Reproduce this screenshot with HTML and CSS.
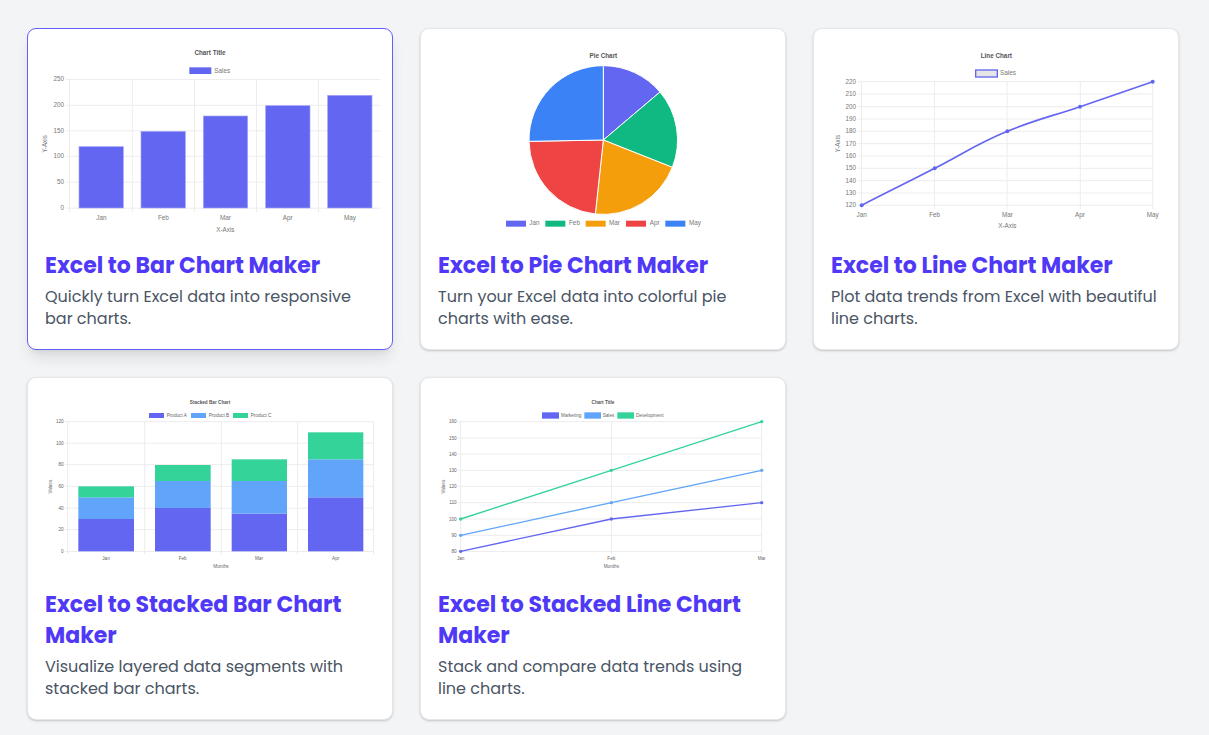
FILE: index.html
```
<!DOCTYPE html>
<html lang="en">
<head>
<meta charset="utf-8">
<meta name="viewport" content="width=device-width, initial-scale=1">
<title>Excel Chart Makers</title>
<link rel="stylesheet" href="styles.css">
</head>
<body>
<main class="grid">
  <a class="card card-active" href="#bar">
    <svg class="chart" viewBox="51 54 1038 609" role="img" aria-label="Bar chart">
      <path class="gridline" d="M138 178.5H1082M138 256H1082M138 332.5H1082M138 409H1082M138 486.5H1082M138 564.500H1082M148.500 178V577M337 178V577M523.500 178V577M709.500 178V577M895.500 178V577"/>
      <g class="indigo"><rect x="508" y="142" width="66" height="20"/><rect class="bar" x="177" y="380" width="133" height="184"/><rect class="bar" x="363" y="334" width="133" height="230"/><rect class="bar" x="550" y="288" width="133" height="276"/><rect class="bar" x="737" y="257" width="133" height="307"/><rect class="bar" x="923" y="226" width="133" height="338"/></g>
      <g class="label">
        <text class="title" x="570" y="104">Chart Title</text>
        <text class="start" x="583" y="158">Sales</text>
        <g class="end"><text x="132" y="184">250</text><text x="132" y="261">200</text><text x="132" y="339">150</text><text x="132" y="415">100</text><text x="132" y="492">50</text><text x="132" y="570">0</text></g>
        <text x="244" y="600">Jan</text><text x="430" y="600">Feb</text><text x="616" y="600">Mar</text><text x="803" y="600">Apr</text><text x="990" y="600">May</text>
        <text x="616" y="635">X-Axis</text>
        <text transform="translate(81 372) rotate(-90)">Y-Axis</text>
      </g>
    </svg>
    <div class="body">
      <h2 class="heading">Excel to Bar Chart Maker</h2>
      <p class="text">Quickly turn Excel data into responsive bar charts.</p>
    </div>
  </a>

  <a class="card" href="#pie">
    <svg class="chart" viewBox="51 54 1038 609" role="img" aria-label="Pie chart">
      <g class="slices">
        <path class="indigo" d="M571 360V137A223 223 0 0 1 741 216Z"/>
        <path class="green" d="M571 360L741 216A223 223 0 0 1 778 442Z"/>
        <path class="amber" d="M571 360L778 442A223 223 0 0 1 547 582Z"/>
        <path class="red" d="M571 360L547 582A223 223 0 0 1 348 364Z"/>
        <path class="blue" d="M571 360L348 364A223 223 0 0 1 571 137Z"/>
      </g>
      <rect class="indigo" x="279" y="602" width="60" height="18"/><rect class="green" x="397" y="602" width="60" height="18"/><rect class="amber" x="518" y="602" width="60" height="18"/><rect class="red" x="639" y="602" width="60" height="18"/><rect class="blue" x="757" y="602" width="60" height="18"/>
      <g class="label">
        <text class="title" x="571" y="113">Pie Chart</text>
        <g class="start"><text x="349" y="616">Jan</text><text x="468" y="616">Feb</text><text x="588" y="616">Mar</text><text x="710" y="616">Apr</text><text x="828" y="616">May</text></g>
      </g>
    </svg>
    <div class="body">
      <h2 class="heading">Excel to Pie Chart Maker</h2>
      <p class="text">Turn your Excel data into colorful pie charts with ease.</p>
    </div>
  </a>

  <a class="card" href="#line">
    <svg class="chart" viewBox="51 54 1038 609" role="img" aria-label="Line chart">
      <path class="gridline" d="M156 185H1040M156 222H1040M156 260H1040M156 297H1040M156 334H1040M156 371H1040M156 408H1040M156 445H1040M156 482H1040M156 519H1040M156 556H1040M166.500 185V567M385.500 185V567M603.500 185V567M823 185V567M1040 185V567"/>
      <rect class="hollow" x="509" y="150" width="65" height="21"/>
      <path class="line line-thick" stroke="#6366f1" d="M167 556C254 511 299 490 386 445S514 371 604 334C690 298 735 290 822 260S953 215 1040 185"/>
      <g class="indigo"><circle cx="167" cy="556" r="6"/><circle cx="386" cy="445" r="6"/><circle cx="604" cy="334" r="6"/><circle cx="822" cy="260" r="6"/><circle cx="1040" cy="185" r="6"/></g>
      <g class="label">
        <text class="title" x="571" y="113">Line Chart</text>
        <text class="start" x="582" y="166">Sales</text>
        <g class="end"><text x="150" y="191">220</text><text x="150" y="228">210</text><text x="150" y="266">200</text><text x="150" y="303">190</text><text x="150" y="340">180</text><text x="150" y="377">170</text><text x="150" y="413">160</text><text x="150" y="451">150</text><text x="150" y="488">140</text><text x="150" y="525">130</text><text x="150" y="561">120</text></g>
        <text x="167" y="590">Jan</text><text x="386" y="590">Feb</text><text x="604" y="590">Mar</text><text x="822" y="590">Apr</text><text x="1040" y="590">May</text>
        <text x="604" y="624">X-Axis</text>
        <text transform="translate(102 371) rotate(-90)">Y-Axis</text>
      </g>
    </svg>
    <div class="body">
      <h2 class="heading">Excel to Line Chart Maker</h2>
      <p class="text">Plot data trends from Excel with beautiful line charts.</p>
    </div>
  </a>

  <a class="card" href="#stacked-bar">
    <svg class="chart" viewBox="51 51 1038 579" role="img" aria-label="Stacked bar chart">
      <path class="gridline" d="M134 155H1062M134 219.500H1062M134 284H1062M134 349H1062M134 414.500H1062M134 479H1062M134 544.500H1062M143 155V553M374 155V553M604 155V553M832.500 155V553M1061 155V553"/>
      <g class="indigo"><rect x="387" y="129" width="45" height="15"/><rect x="175" y="447" width="167" height="97"/><rect x="405" y="414" width="167" height="130"/><rect x="635" y="431" width="166" height="113"/><rect x="864" y="382" width="166" height="162"/></g>
      <g class="sky"><rect x="513" y="129" width="45" height="15"/><rect x="175" y="382" width="167" height="65"/><rect x="405" y="333" width="167" height="81"/><rect x="635" y="333" width="166" height="98"/><rect x="864" y="268" width="166" height="114"/></g>
      <g class="mint"><rect x="639" y="129" width="45" height="15"/><rect x="175" y="349" width="167" height="33"/><rect x="405" y="285" width="167" height="48"/><rect x="635" y="268" width="166" height="65"/><rect x="864" y="187" width="166" height="81"/></g>
      <g class="label label-small">
        <text class="title" x="570" y="102">Stacked Bar Chart</text>
        <g class="start"><text x="440" y="141">Product A</text><text x="566" y="141">Product B</text><text x="692" y="141">Product C</text></g>
        <g class="end"><text x="131" y="160">120</text><text x="131" y="224">100</text><text x="131" y="289">80</text><text x="131" y="354">60</text><text x="131" y="419">40</text><text x="131" y="483">20</text><text x="131" y="549">0</text></g>
        <text x="258" y="570">Jan</text><text x="488" y="570">Feb</text><text x="717" y="570">Mar</text><text x="947" y="570">Apr</text>
        <text x="603" y="594">Months</text>
        <text transform="translate(96 350) rotate(-90)">Values</text>
      </g>
    </svg>
    <div class="body">
      <h2 class="heading">Excel to Stacked Bar Chart Maker</h2>
      <p class="text">Visualize layered data segments with stacked bar charts.</p>
    </div>
  </a>

  <a class="card" href="#stacked-line">
    <svg class="chart" viewBox="51 51 1038 579" role="img" aria-label="Stacked line chart">
      <path class="gridline" d="M134 155H1046M134 204H1046M134 252H1046M134 301H1046M134 349H1046M134 398H1046M134 447H1046M134 496H1046M134 544.500H1046M143 155V553M595.500 155V553M1046 155V553"/>
      <rect class="indigo" x="387" y="127" width="51" height="19"/><rect class="sky" x="514" y="127" width="50" height="19"/><rect class="mint" x="613" y="127" width="50" height="19"/>
      <g class="line"><path stroke="#6366f1" d="M143 544L595 447L1046 398"/><path stroke="#60a5fa" d="M143 496L595 398L1046 301"/><path stroke="#34d399" d="M143 447L595 301L1046 155"/></g>
      <g class="indigo"><circle cx="143" cy="544" r="5"/><circle cx="595" cy="447" r="5"/><circle cx="1046" cy="398" r="5"/></g>
      <g class="sky"><circle cx="143" cy="496" r="5"/><circle cx="595" cy="398" r="5"/><circle cx="1046" cy="301" r="5"/></g>
      <g class="mint"><circle cx="143" cy="447" r="5"/><circle cx="595" cy="301" r="5"/><circle cx="1046" cy="155" r="5"/></g>
      <g class="label label-small">
        <text class="title" x="570" y="102">Chart Title</text>
        <g class="start"><text x="444" y="141">Marketing</text><text x="569" y="141">Sales</text><text x="669" y="141">Development</text></g>
        <g class="end"><text x="131" y="160">160</text><text x="131" y="209">150</text><text x="131" y="257">140</text><text x="131" y="306">130</text><text x="131" y="354">120</text><text x="131" y="403">110</text><text x="131" y="452">100</text><text x="131" y="501">90</text><text x="131" y="549">80</text></g>
        <text x="143" y="570">Jan</text><text x="595" y="570">Feb</text><text x="1046" y="570">Mar</text>
        <text x="595" y="594">Months</text>
        <text transform="translate(96 350) rotate(-90)">Values</text>
      </g>
    </svg>
    <div class="body">
      <h2 class="heading">Excel to Stacked Line Chart Maker</h2>
      <p class="text">Stack and compare data trends using line charts.</p>
    </div>
  </a>
</main>
</body>
</html>
```
FILE: styles.css
```
* { box-sizing: border-box; }
body {
  margin: 0;
  background: #f3f4f6;
  font-family: Poppins, Inter, "Open Sans", sans-serif;
}
.grid {
  display: grid;
  grid-template-columns: repeat(3, minmax(0, 1fr));
  align-items: start;
  gap: 27px;
  padding: 28px 30px 15px 27px;
}
.card {
  display: block;
  padding: 9px;
  border: 1px solid #e5e7eb;
  border-radius: 9px;
  background: #fff;
  box-shadow: 0 1px 3px rgba(0, 0, 0, 0.1), 0 1px 2px rgba(0, 0, 0, 0.1);
  text-decoration: none;
}
.card-active {
  border-color: #615fff;
  box-shadow: 0 10px 15px -3px rgba(0, 0, 0, 0.1), 0 4px 6px -4px rgba(0, 0, 0, 0.1);
}
.chart { display: block; width: 100%; height: auto; }
.body { padding: 9px 8px 10px; }
.heading {
  margin: 0 0 5px;
  color: #4f39f6;
  font-size: 22px;
  font-weight: 700;
  line-height: 31px;
}
.text {
  margin: 0;
  color: #4a5565;
  font-size: 16px;
  line-height: 22px;
}

.gridline { fill: none; stroke: #ededed; stroke-width: 3; }
.indigo { fill: #6366f1; }
.green { fill: #10b981; }
.amber { fill: #f59e0b; }
.red { fill: #ef4444; }
.blue { fill: #3b82f6; }
.sky { fill: #60a5fa; }
.mint { fill: #34d399; }
.bar { stroke: #a5a6f7; stroke-width: 2; }
.slices { stroke: #fff; stroke-width: 3; stroke-linejoin: round; }
.hollow { fill: #e5e5e5; stroke: #6366f1; stroke-width: 4; }
.line { fill: none; stroke-width: 4; }
.line-thick { stroke-width: 5; }
.label {
  fill: #777;
  font-family: "Liberation Sans", Arial, sans-serif;
  font-size: 19px;
  text-anchor: middle;
}
.label-small { font-size: 14px; fill: #666; }
.title { font-weight: 700; fill: #555; }
.start { text-anchor: start; }
.end { text-anchor: end; }
```
